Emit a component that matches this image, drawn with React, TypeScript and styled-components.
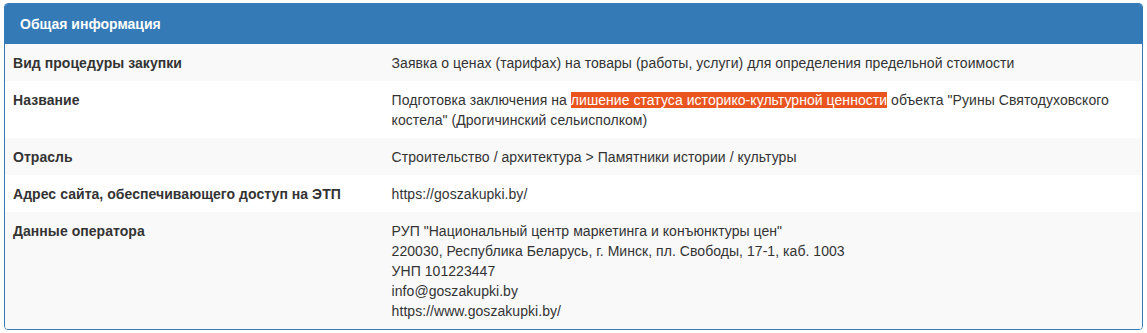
import styled, { createGlobalStyle } from "styled-components";

const GlobalStyle = createGlobalStyle`
  body {
    margin: 0;
    background: #fff;
    font-family: "Liberation Sans", Arial, sans-serif;
    font-size: 14px;
    line-height: 20px;
    color: #333;
  }
`;

const Page = styled.div`
  padding: 3px 4px 0 4px;
`;

const Panel = styled.div`
  border: 1px solid #337ab7;
  border-radius: 4px;
  background: #fff;
  overflow: hidden;
`;

const Heading = styled.div`
  background: #337ab7;
  color: #fff;
  padding: 11px 15px;
  font-size: 14px;
  font-weight: 700;
  line-height: 18px;
`;

const Table = styled.table`
  width: 100%;
  border-collapse: collapse;
  border-spacing: 0;
  letter-spacing: 0.05px;
`;

const Row = styled.tr<{ $striped: boolean }>`
  background: ${(p) => (p.$striped ? "#f9f9f9" : "#fff")};

  & + & > td {
    border-top: 1px solid #ddd;
  }
`;

const Label = styled.td`
  width: 33.3%;
  padding: 9px 8px 8px;
  vertical-align: top;
  font-weight: 700;
`;

const Value = styled.td`
  padding: 9px 8px 8px;
  vertical-align: top;
`;

const Mark = styled.span`
  background: #e9541f;
  color: #fff;
`;

type Item = { label: string; value: React.ReactNode };

const items: Item[] = [
  {
    label: "Вид процедуры закупки",
    value:
      "Заявка о ценах (тарифах) на товары (работы, услуги) для определения предельной стоимости",
  },
  {
    label: "Название",
    value: (
      <>
        Подготовка заключения на <Mark>лишение статуса историко-культурной ценности</Mark>{" "}
        объекта "Руины Святодуховского костела" (Дрогичинский сельисполком)
      </>
    ),
  },
  {
    label: "Отрасль",
    value: "Строительство / архитектура > Памятники истории / культуры",
  },
  {
    label: "Адрес сайта, обеспечивающего доступ на ЭТП",
    value: "https://goszakupki.by/",
  },
  {
    label: "Данные оператора",
    value: (
      <>
        РУП "Национальный центр маркетинга и конъюнктуры цен"
        <br />
        220030, Республика Беларусь, г. Минск, пл. Свободы, 17-1, каб. 1003
        <br />
        УНП 101223447
        <br />
        info@goszakupki.by
        <br />
        https://www.goszakupki.by/
      </>
    ),
  },
];

export default function App(): JSX.Element {
  return (
    <Page>
      <GlobalStyle />
      <Panel>
        <Heading>Общая информация</Heading>
        <Table>
          <tbody>
            {items.map((item, i) => (
              <Row key={item.label} $striped={i % 2 === 0}>
                <Label>{item.label}</Label>
                <Value>{item.value}</Value>
              </Row>
            ))}
          </tbody>
        </Table>
      </Panel>
    </Page>
  );
}
